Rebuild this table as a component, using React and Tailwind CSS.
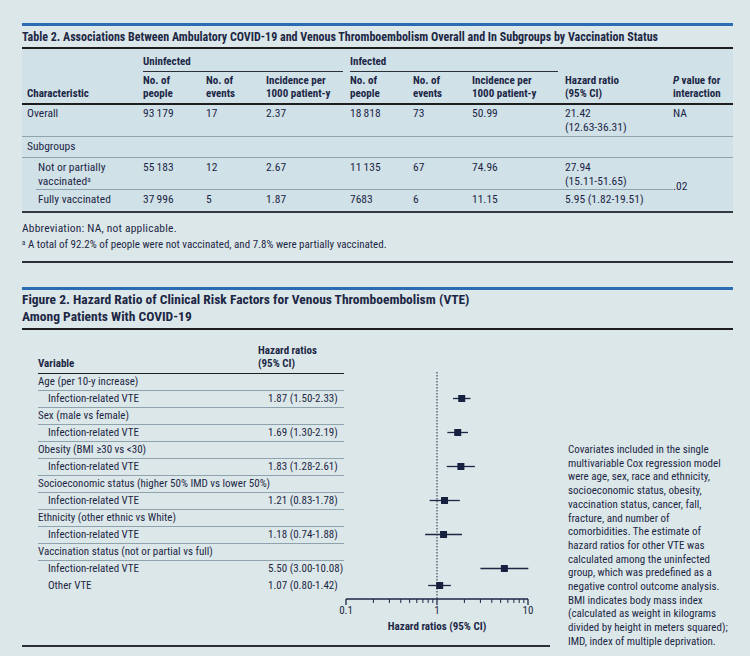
import React from "react";

const font = "font-['Roboto_Condensed','Liberation_Sans_Narrow','DejaVu_Sans_Condensed',Roboto,sans-serif] font-stretch-condensed";
const svgFont = "Roboto Condensed, Liberation Sans Narrow, DejaVu Sans Condensed, Roboto, sans-serif";

const forestRows = [
  { label: "Age (per 10-y increase)", head: true },
  { label: "Infection-related VTE", value: "1.87 (1.50-2.33)", hr: 1.87, lo: 1.5, hi: 2.33 },
  { label: "Sex (male vs female)", head: true },
  { label: "Infection-related VTE", value: "1.69 (1.30-2.19)", hr: 1.69, lo: 1.3, hi: 2.19 },
  { label: "Obesity (BMI ≥30 vs <30)", head: true },
  { label: "Infection-related VTE", value: "1.83 (1.28-2.61)", hr: 1.83, lo: 1.28, hi: 2.61 },
  { label: "Socioeconomic status (higher 50% IMD vs lower 50%)", head: true },
  { label: "Infection-related VTE", value: "1.21 (0.83-1.78)", hr: 1.21, lo: 0.83, hi: 1.78 },
  { label: "Ethnicity (other ethnic vs White)", head: true },
  { label: "Infection-related VTE", value: "1.18 (0.74-1.88)", hr: 1.18, lo: 0.74, hi: 1.88 },
  { label: "Vaccination status (not or partial vs full)", head: true },
  { label: "Infection-related VTE", value: "5.50 (3.00-10.08)", hr: 5.5, lo: 3.0, hi: 10.08, noLine: true },
  { label: "Other VTE", value: "1.07 (0.80-1.42)", hr: 1.07, lo: 0.8, hi: 1.42, noLine: true },
];

const noteLines = [
  "Covariates included in the single",
  "multivariable Cox regression model",
  "were age, sex, race and ethnicity,",
  "socioeconomic status, obesity,",
  "vaccination status, cancer, fall,",
  "fracture, and number of",
  "comorbidities. The estimate of",
  "hazard ratios for other VTE was",
  "calculated among the uninfected",
  "group, which was predefined as a",
  "negative control outcome analysis.",
  "BMI indicates body mass index",
  "(calculated as weight in kilograms",
  "divided by height in meters squared);",
  "IMD, index of multiple deprivation.",
];

// log scale: 0.1 -> 2, 1 -> 93, 10 -> 184
const xOf = (v) => 2 + 91 * (Math.log10(v) + 1);

function ForestPlot() {
  const minor = [];
  for (const base of [0.1, 1]) {
    for (let k = 2; k <= 9; k++) minor.push(base * k);
  }
  const axisY = 269;
  return (
    <svg width="206" height="316" className="shrink-0 overflow-visible">
      <line x1="93" y1="42" x2="93" y2={axisY} stroke="#1c2746" strokeWidth="1" strokeDasharray="1.5 1.5" />
      {forestRows.map((r, i) => {
        if (r.head) return null;
        const cy = 51.5 + 17 * i;
        const x = xOf(r.hr);
        return (
          <g key={i}>
            <line x1={xOf(r.lo)} y1={cy} x2={xOf(r.hi)} y2={cy} stroke="#1c2746" strokeWidth="1.3" />
            <rect x={x - 3.5} y={cy - 3.5} width="7" height="7" fill="#16213f" />
          </g>
        );
      })}
      <line x1="2" y1={axisY} x2="184" y2={axisY} stroke="#1c2746" strokeWidth="1.3" />
      {[0.1, 1, 10].map((v) => (
        <line key={v} x1={xOf(v)} y1={axisY} x2={xOf(v)} y2={axisY + 6} stroke="#1c2746" strokeWidth="1.3" />
      ))}
      {minor.map((v) => (
        <line key={v} x1={xOf(v)} y1={axisY} x2={xOf(v)} y2={axisY + 4} stroke="#1c2746" strokeWidth="1" />
      ))}
      <g fontSize="11" fill="#1c2746" fontFamily={svgFont} textAnchor="middle" style={{ fontStretch: "condensed" }}>
        <text x="2" y={axisY + 15}>0.1</text>
        <text x="93" y={axisY + 15}>1</text>
        <text x="184" y={axisY + 15}>10</text>
        <text x="93" y={axisY + 31} fontWeight="bold">Hazard ratios (95% CI)</text>
      </g>
    </svg>
  );
}

export default function App() {
  const cell = "pt-[2px]";
  return (
    <div className={`min-h-[656px] w-[750px] bg-[#dce7e9] text-[#1c2746] ${font}`}>
      <div className="ml-[22px] w-[711px] pt-[23px]">
        {/* Table 2 */}
        <div className="h-[3px] bg-[#2a6cb3]" />
        <div className="flex h-[23px] items-center whitespace-nowrap border-b-2 border-[#1e1e1e] text-[12px] font-bold">
          Table 2. Associations Between Ambulatory COVID-19 and Venous Thromboembolism Overall and In Subgroups by Vaccination Status
        </div>

        <div className="grid grid-cols-[121px_63px_60px_84px_63px_59px_93px_108px_60px] border-b-2 border-[#333a44] bg-[#d1e1e8] text-[11.5px] leading-[14px]">
          {/* group header */}
          <div className="pt-[6px]" />
          <div className="col-span-3 pt-[6px] text-[11px]">
            <div className="mr-[7px] border-b border-[#2b2f36] pb-[2px] font-bold">Uninfected</div>
          </div>
          <div className="col-span-3 pt-[6px] text-[11px]">
            <div className="mr-[7px] border-b border-[#2b2f36] pb-[2px] font-bold">Infected</div>
          </div>
          <div className="col-span-2" />

          {/* column header */}
          <div className="col-span-9 grid grid-cols-subgrid items-end border-b-2 border-[#1e1e1e] pt-[2px] pb-[3px] text-[11px] font-bold leading-[13px]">
            <div className="pl-[5px]">Characteristic</div>
            <div>No. of<br />people</div>
            <div>No. of<br />events</div>
            <div>Incidence per<br />1000 patient-y</div>
            <div>No. of<br />people</div>
            <div>No. of<br />events</div>
            <div>Incidence per<br />1000 patient-y</div>
            <div>Hazard ratio<br />(95% CI)</div>
            <div><i>P</i> value for<br />interaction</div>
          </div>

          {/* overall */}
          <div className="col-span-9 grid grid-cols-subgrid border-b border-[#8ea3ad] pt-[1px] pb-[2px]">
            <div className="pl-[5px]">Overall</div>
            <div>93&#8201;179</div>
            <div>17</div>
            <div>2.37</div>
            <div>18&#8201;818</div>
            <div>73</div>
            <div>50.99</div>
            <div>21.42<br />(12.63-36.31)</div>
            <div>NA</div>
          </div>

          {/* subgroups */}
          <div className="col-span-9 border-b border-[#8ea3ad] pt-[2px] pb-[4px] pl-[5px]">Subgroups</div>

          {/* not or partially */}
          <div className={`col-span-8 ml-[14px] grid grid-cols-[107px_63px_60px_84px_63px_59px_93px_108px] border-b border-[#8ea3ad] ${cell} pb-[1px]`}>
            <div className="pl-[2px]">Not or partially<br />vaccinated<sup className="text-[7px]">a</sup></div>
            <div>55&#8201;183</div>
            <div>12</div>
            <div>2.67</div>
            <div>11&#8201;135</div>
            <div>67</div>
            <div>74.96</div>
            <div>27.94<br />(15.11-51.65)</div>
          </div>
          <div className="row-span-2 flex items-center pt-[3px]">.02</div>
          <div className={`col-span-8 ml-[14px] grid grid-cols-[107px_63px_60px_84px_63px_59px_93px_108px] ${cell} pb-[5px]`}>
            <div className="pl-[2px]">Fully vaccinated</div>
            <div>37&#8201;996</div>
            <div>5</div>
            <div>1.87</div>
            <div>7683</div>
            <div>6</div>
            <div>11.15</div>
            <div>5.95 (1.82-19.51)</div>
          </div>
        </div>

        <div className="border-b-2 border-[#2b2f36] pt-[8px] pb-[9px] leading-[14px]">
          <div className="text-[11.5px] tracking-[0.2px]">Abbreviation: NA, not applicable.</div>
          <div className="mt-[3px] text-[11px]">
            <sup className="text-[7px]">a</sup> A total of 92.2% of people were not vaccinated, and 7.8% were partially vaccinated.
          </div>
        </div>

        {/* Figure 2 */}
        <div className="mt-[24px] h-[3px] bg-[#2a6cb3]" />
        <div className="border-b-2 border-[#1e1e1e] pt-[1px] pb-[3px] text-[13.5px] leading-[17px] font-bold">
          Figure 2. Hazard Ratio of Clinical Risk Factors for Venous Thromboembolism (VTE)
          <br />
          Among Patients With COVID-19
        </div>

        <div className="flex">
          <div className="flex h-[317px] w-[528px] border-b-2 border-[#2b2f36] pl-[16px]">
            <div className="w-[306px] pt-[14px] text-[11px]">
              <div className="flex items-end border-b-[1.5px] border-[#1e1e1e] pb-[3px] leading-[13px] font-bold">
                <div className="w-[220px]">Variable</div>
                <div>Hazard ratios<br />(95% CI)</div>
              </div>
              {forestRows.map((r, i) => (
                <div
                  key={i}
                  className={`flex h-[17px] items-center ${r.noLine ? "" : "border-b border-[#8ea3ad]"}`}
                >
                  <div className={`w-[230px] whitespace-nowrap ${r.head ? "" : "pl-[10px]"}`}>{r.label}</div>
                  {r.value && <div className="whitespace-nowrap">{r.value}</div>}
                </div>
              ))}
            </div>
            <ForestPlot />
          </div>

          <div className="ml-[18px] pt-[113px] text-[11px] leading-[13.7px]">
            {noteLines.map((l, i) => (
              <div key={i} className="whitespace-nowrap">{l}</div>
            ))}
          </div>
        </div>
      </div>
    </div>
  );
}
